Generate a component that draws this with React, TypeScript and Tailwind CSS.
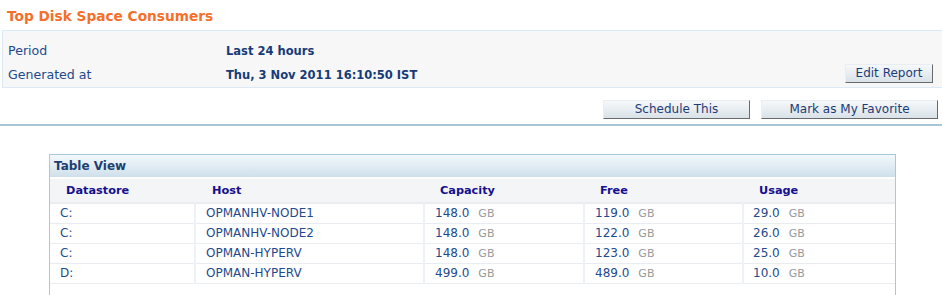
const rows = [
  { ds: "C:", host: "OPMANHV-NODE1", cap: "148.0", free: "119.0", usage: "29.0" },
  { ds: "C:", host: "OPMANHV-NODE2", cap: "148.0", free: "122.0", usage: "26.0" },
  { ds: "C:", host: "OPMAN-HYPERV", cap: "148.0", free: "123.0", usage: "25.0" },
  { ds: "D:", host: "OPMAN-HYPERV", cap: "499.0", free: "489.0", usage: "10.0" },
];

function Btn({ children, className = "" }: { children: React.ReactNode; className?: string }) {
  return (
    <button
      className={`h-[19px] border border-t-[#e8eef2] border-l-[#e8eef2] border-b-[#6a6a6a] border-r-[#6a6a6a] bg-gradient-to-b from-[#f6f8fa] to-[#d9e2e8] text-[12px] leading-[17px] text-[#1c3c78] ${className}`}
    >
      {children}
    </button>
  );
}

function Amount({ value }: { value: string }) {
  return (
    <>
      <span className="text-[#1f4a8c]">{value}</span>
      <span className="ml-[9px] text-[11px] text-[#9a9a9a]">GB</span>
    </>
  );
}

export default function App() {
  return (
    <div className="h-[295px] w-[942px] overflow-hidden bg-white font-['DejaVu_Sans',Verdana,sans-serif]">
      <div className="h-[30px] pl-[7px] pt-[7px] text-[13.7px] font-bold leading-[19px] text-[#f4702a]">
        Top Disk Space Consumers
      </div>

      <div className="ml-[2px] flex h-[58px] border border-r-0 border-[#dce9f7] bg-[#f7f7f7]">
        <div className="flex flex-col pt-[8px] pl-[5px] text-[12.6px] leading-[24px] text-[#1e4a8a]">
          <div className="flex items-baseline">
            <span className="w-[218px]">Period</span>
            <span className="text-[11.5px] font-bold text-[#163c78]">Last 24 hours</span>
          </div>
          <div className="flex items-baseline">
            <span className="w-[218px]">Generated at</span>
            <span className="text-[11.5px] font-bold text-[#163c78]">Thu, 3 Nov 2011 16:10:50 IST</span>
          </div>
        </div>
        <div className="ml-auto flex items-end pb-[4px] pr-[9px]">
          <Btn className="w-[88px]">Edit Report</Btn>
        </div>
      </div>

      <div className="flex h-[36px] items-start justify-end gap-[11px] pr-[4px] pt-[12px]">
        <Btn className="w-[147px]">Schedule This</Btn>
        <Btn className="w-[177px]">Mark as My Favorite</Btn>
      </div>

      <div className="h-[2px] bg-[#a6c7d6]" />

      <div className="ml-[49px] mt-[28px] w-[847px] border border-b-0 border-[#a7c9da] pb-[20px]">
        <div className="h-[22px] bg-gradient-to-b from-[#f3f8fc] to-[#cfe0eb] pl-[4px] text-[12px] font-bold leading-[22px] text-[#1d3f70]">
          Table View
        </div>
        <table className="w-full border-collapse text-[12px] leading-[16px] text-[#1f4a8c]">
          <colgroup>
            <col className="w-[145px]" />
            <col className="w-[229px]" />
            <col className="w-[160px]" />
            <col className="w-[159px]" />
            <col />
          </colgroup>
          <thead>
            <tr className="h-[25px] border-t-2 border-b-2 border-t-white border-b-[#e9edf1] bg-[#f4f5f7] text-left text-[11.3px] font-bold text-[#16108e]">
              <th className="p-0 pl-[16px]">Datastore</th>
              <th className="p-0 pl-[17px]">Host</th>
              <th className="p-0 pl-[16px]">Capacity</th>
              <th className="p-0 pl-[16px]">Free</th>
              <th className="p-0 pl-[16px]">Usage</th>
            </tr>
          </thead>
          <tbody>
            {rows.map((r, i) => (
              <tr key={i} className="h-[20px] border-b border-[#e9edf2]">
                <td className="p-0 pl-[10px]">{r.ds}</td>
                <td className="border-l-2 border-[#eef1f5] p-0 pl-[10px]">{r.host}</td>
                <td className="border-l-2 border-[#eef1f5] p-0 pl-[10px]">
                  <Amount value={r.cap} />
                </td>
                <td className="border-l-2 border-[#eef1f5] p-0 pl-[10px]">
                  <Amount value={r.free} />
                </td>
                <td className="border-l-2 border-[#eef1f5] p-0 pl-[9px]">
                  <Amount value={r.usage} />
                </td>
              </tr>
            ))}
          </tbody>
        </table>
      </div>
    </div>
  );
}
